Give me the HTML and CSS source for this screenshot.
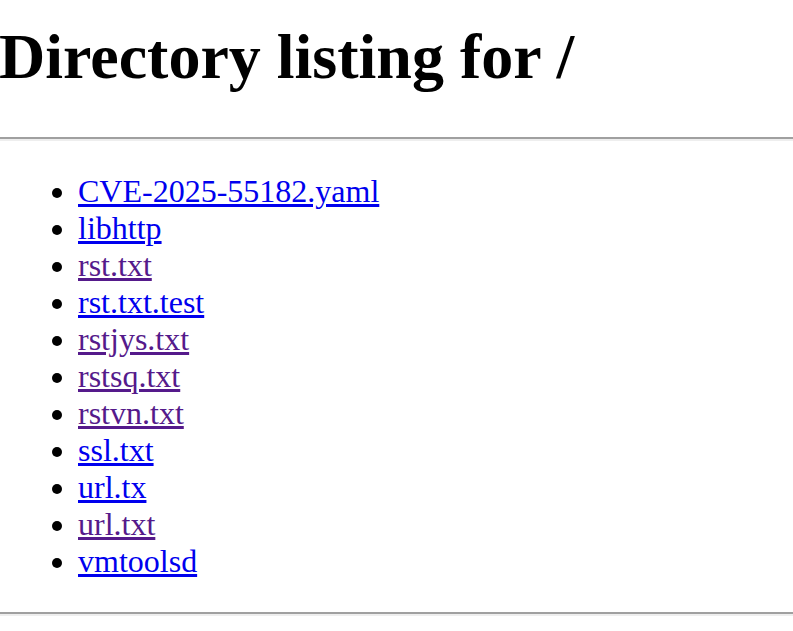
FILE: index.html
```html
<!DOCTYPE html>
<html>
<head>
<meta charset="utf-8">
<title>Directory listing for /</title>
<link rel="stylesheet" href="styles.css">
</head>
<body class="page">
<h1 class="title">Directory listing for /</h1>
<hr class="rule">
<ul class="listing">
<li><a class="link" href="#">CVE-2025-55182.yaml</a></li>
<li><a class="link" href="#">libhttp</a></li>
<li><a class="link visited" href="#">rst.txt</a></li>
<li><a class="link" href="#">rst.txt.test</a></li>
<li><a class="link visited" href="#">rstjys.txt</a></li>
<li><a class="link visited" href="#">rstsq.txt</a></li>
<li><a class="link visited" href="#">rstvn.txt</a></li>
<li><a class="link" href="#">ssl.txt</a></li>
<li><a class="link" href="#">url.tx</a></li>
<li><a class="link visited" href="#">url.txt</a></li>
<li><a class="link" href="#">vmtoolsd</a></li>
</ul>
<hr class="rule">
</body>
</html>
```

FILE: styles.css
```css
html, body {
  margin: 0;
  padding: 0;
  background: #ffffff;
}
.page {
  font-family: "Liberation Serif", "Times New Roman", serif;
  font-size: 32px;
  color: #000000;
  overflow: hidden;
}
.title {
  font-size: 64px;
  font-weight: bold;
  margin: 20px 0 43px -1px;
  line-height: normal;
}
.rule {
  height: 0;
  margin: 0;
  border: 0;
  border-top: 2px solid #a0a0a0;
  border-bottom: 2px solid #eeeeee;
}
.listing {
  margin: 32px 0;
  padding-left: 78px;
  list-style: disc;
}
.listing li {
  line-height: 37px;
}
.link {
  color: #0000ee;
  text-decoration: underline;
  text-decoration-thickness: 2.5px;
}
.link.visited {
  color: #551a8b;
}
```
